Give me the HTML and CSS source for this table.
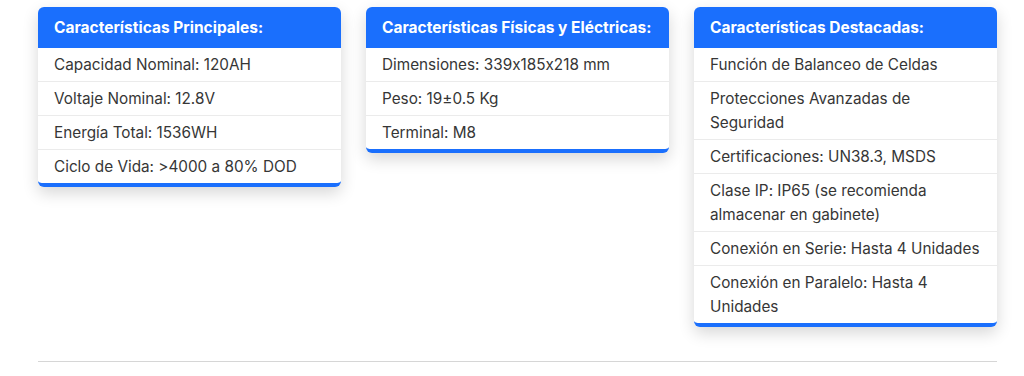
FILE: index.html
```html
<!DOCTYPE html>
<html lang="es">
<head>
<meta charset="utf-8">
<link rel="stylesheet" href="styles.css">
</head>
<body>
<div class="wrap">
  <div class="grid">
    <div class="card">
      <div class="card-head">Características Principales:</div>
      <ul class="list">
        <li>Capacidad Nominal: 120AH</li>
        <li>Voltaje Nominal: 12.8V</li>
        <li>Energía Total: 1536WH</li>
        <li>Ciclo de Vida: &gt;4000 a 80% DOD</li>
      </ul>
    </div>
    <div class="card">
      <div class="card-head">Características Físicas y Eléctricas:</div>
      <ul class="list">
        <li>Dimensiones: 339x185x218 mm</li>
        <li>Peso: 19±0.5 Kg</li>
        <li>Terminal: M8</li>
      </ul>
    </div>
    <div class="card">
      <div class="card-head">Características Destacadas:</div>
      <ul class="list">
        <li>Función de Balanceo de Celdas</li>
        <li>Protecciones Avanzadas de Seguridad</li>
        <li>Certificaciones: UN38.3, MSDS</li>
        <li>Clase IP: IP65 (se recomienda almacenar en gabinete)</li>
        <li>Conexión en Serie: Hasta 4 Unidades</li>
        <li>Conexión en Paralelo: Hasta 4 Unidades</li>
      </ul>
    </div>
  </div>
  <hr class="divider">
</div>
</body>
</html>
```

FILE: styles.css
```css
* { box-sizing: border-box; }
html, body { margin: 0; padding: 0; background: #fff; }
body {
  font-family: Inter, "Noto Sans", "Liberation Sans", sans-serif;
  font-feature-settings: "calt" 0;
  color: #363636;
}
.wrap {
  width: 959px;
  margin-left: 38px;
  padding-top: 7px;
}
.grid {
  display: grid;
  grid-template-columns: repeat(3, 303px);
  column-gap: 25px;
  align-items: start;
}
.card {
  background: #fff;
  border-radius: 6px;
  overflow: hidden;
  border-bottom: 4px solid #1a6ffd;
  box-shadow: 0 6px 16px rgba(0, 0, 0, 0.16);
}
.card-head {
  background: #1a6ffd;
  color: #fff;
  font-weight: 700;
  font-size: 15.5px;
  line-height: 24px;
  padding: 8.5px 16px 8.5px 16px;
}
.list {
  list-style: none;
  margin: 0;
  padding: 0;
}
.list li {
  font-size: 15.3px;
  line-height: 24px;
  padding: 4.5px 12px 4.5px 16px;
  border-bottom: 1px solid #ebebeb;
}
.list li:last-child { border-bottom: 0; }
.divider {
  border: 0;
  border-top: 1px solid #d6d6d6;
  margin: 34px 0 0 0;
}
```
